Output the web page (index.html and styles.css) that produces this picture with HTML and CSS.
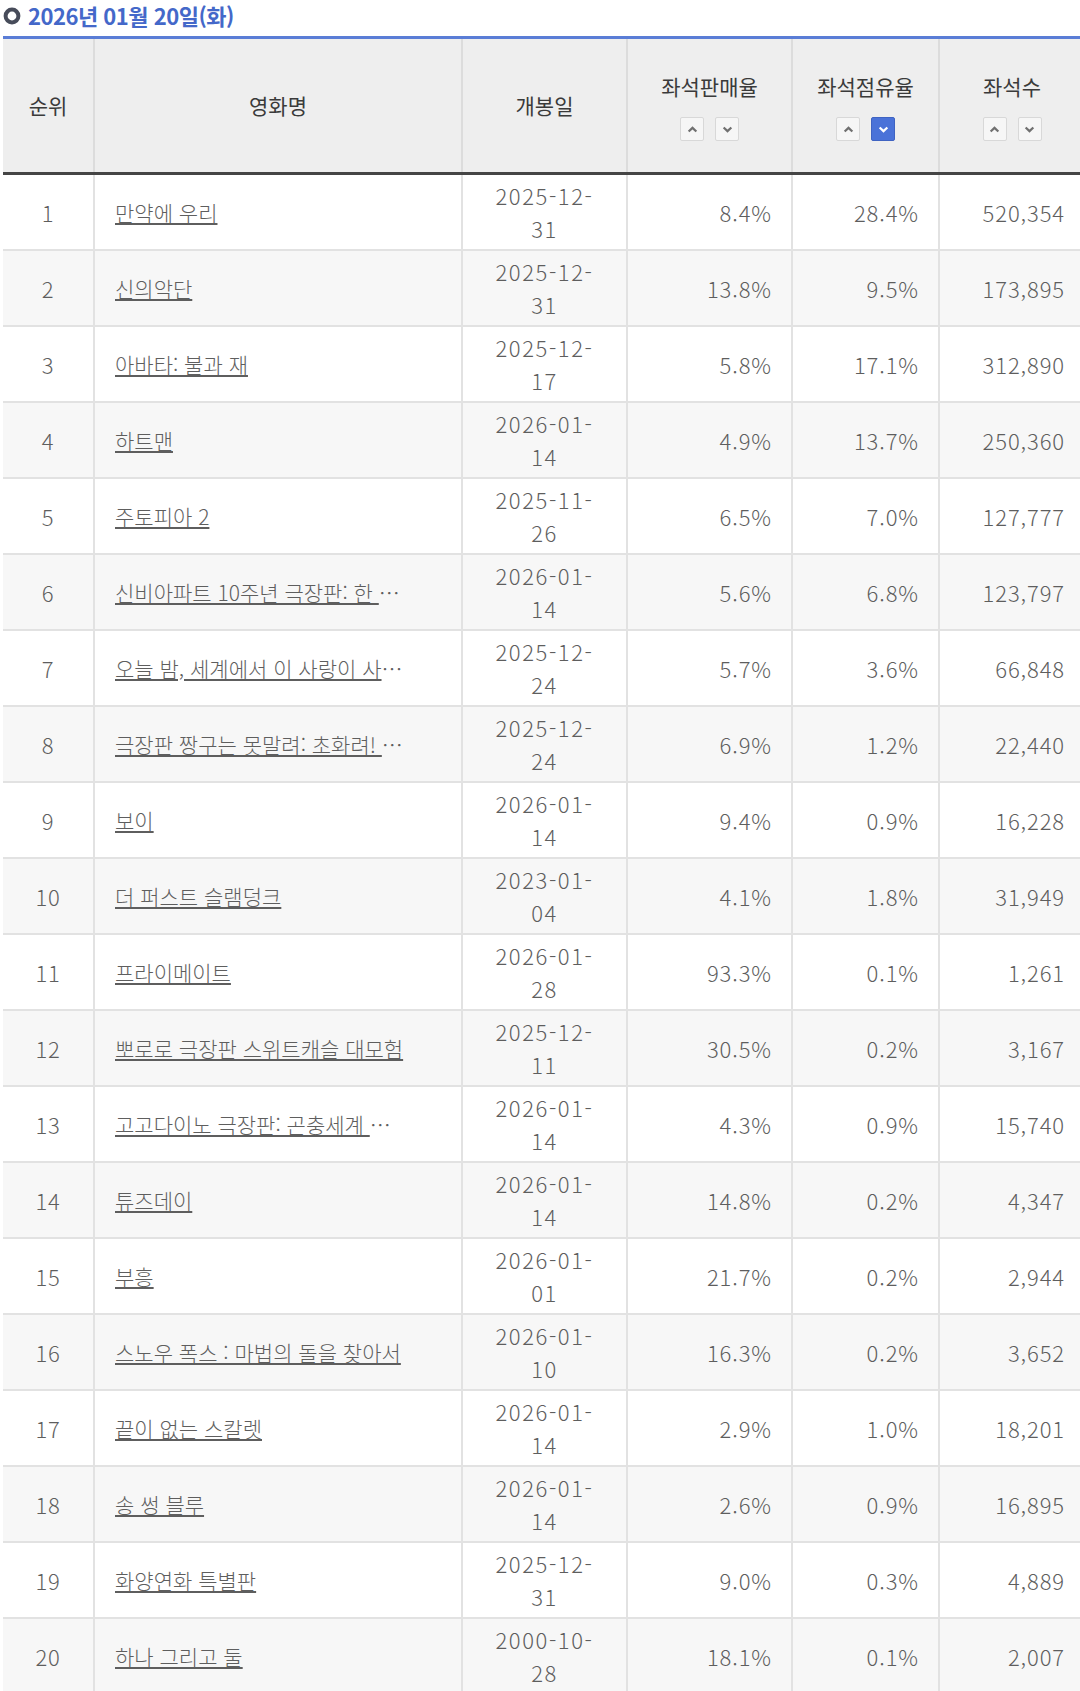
FILE: index.html
```html
<!DOCTYPE html>
<html lang="ko">
<head>
<meta charset="utf-8">
<title>좌석판매율 순위</title>
<link rel="stylesheet" href="styles.css">
</head>
<body>
<div class="page">
  <h2 class="date-title">
    <svg class="bullet" width="18" height="18" viewBox="0 0 18 18" aria-hidden="true"><circle cx="9" cy="9" r="6.4" fill="none" stroke="#474c5a" stroke-width="4"/></svg>
    <span>2026년 01월 20일(화)</span>
  </h2>
  <table class="rank-table">
    <colgroup>
      <col class="c-rank"><col class="c-name"><col class="c-date"><col class="c-rate"><col class="c-share"><col class="c-seat">
    </colgroup>
    <thead>
      <tr>
        <th>순위</th>
        <th>영화명</th>
        <th>개봉일</th>
        <th><div class="th-label">좌석판매율</div><div class="sort"><button class="sort-btn" aria-label="오름차순"><svg viewBox="0 0 10 6"><path d="M1.5 4.8 5 1.5 8.5 4.8"/></svg></button><button class="sort-btn" aria-label="내림차순"><svg viewBox="0 0 10 6"><path d="M1.5 1.2 5 4.5 8.5 1.2"/></svg></button></div></th>
        <th><div class="th-label">좌석점유율</div><div class="sort"><button class="sort-btn" aria-label="오름차순"><svg viewBox="0 0 10 6"><path d="M1.5 4.8 5 1.5 8.5 4.8"/></svg></button><button class="sort-btn active" aria-label="내림차순"><svg viewBox="0 0 10 6"><path d="M1.5 1.2 5 4.5 8.5 1.2"/></svg></button></div></th>
        <th><div class="th-label">좌석수</div><div class="sort"><button class="sort-btn" aria-label="오름차순"><svg viewBox="0 0 10 6"><path d="M1.5 4.8 5 1.5 8.5 4.8"/></svg></button><button class="sort-btn" aria-label="내림차순"><svg viewBox="0 0 10 6"><path d="M1.5 1.2 5 4.5 8.5 1.2"/></svg></button></div></th>
      </tr>
    </thead>
    <tbody>
      <tr><td class="rank">1</td><td class="name"><a href="#" class="movie-link">만약에 우리</a></td><td class="date">2025-12-<br>31</td><td class="num">8.4%</td><td class="num">28.4%</td><td class="num">520,354</td></tr>
      <tr><td class="rank">2</td><td class="name"><a href="#" class="movie-link">신의악단</a></td><td class="date">2025-12-<br>31</td><td class="num">13.8%</td><td class="num">9.5%</td><td class="num">173,895</td></tr>
      <tr><td class="rank">3</td><td class="name"><a href="#" class="movie-link">아바타: 불과 재</a></td><td class="date">2025-12-<br>17</td><td class="num">5.8%</td><td class="num">17.1%</td><td class="num">312,890</td></tr>
      <tr><td class="rank">4</td><td class="name"><a href="#" class="movie-link">하트맨</a></td><td class="date">2026-01-<br>14</td><td class="num">4.9%</td><td class="num">13.7%</td><td class="num">250,360</td></tr>
      <tr><td class="rank">5</td><td class="name"><a href="#" class="movie-link">주토피아 2</a></td><td class="date">2025-11-<br>26</td><td class="num">6.5%</td><td class="num">7.0%</td><td class="num">127,777</td></tr>
      <tr><td class="rank">6</td><td class="name"><a href="#" class="movie-link">신비아파트 10주년 극장판: 한 </a><span class="more">…</span></td><td class="date">2026-01-<br>14</td><td class="num">5.6%</td><td class="num">6.8%</td><td class="num">123,797</td></tr>
      <tr><td class="rank">7</td><td class="name"><a href="#" class="movie-link">오늘 밤, 세계에서 이 사랑이 사</a><span class="more">…</span></td><td class="date">2025-12-<br>24</td><td class="num">5.7%</td><td class="num">3.6%</td><td class="num">66,848</td></tr>
      <tr><td class="rank">8</td><td class="name"><a href="#" class="movie-link">극장판 짱구는 못말려: 초화려! </a><span class="more">…</span></td><td class="date">2025-12-<br>24</td><td class="num">6.9%</td><td class="num">1.2%</td><td class="num">22,440</td></tr>
      <tr><td class="rank">9</td><td class="name"><a href="#" class="movie-link">보이</a></td><td class="date">2026-01-<br>14</td><td class="num">9.4%</td><td class="num">0.9%</td><td class="num">16,228</td></tr>
      <tr><td class="rank">10</td><td class="name"><a href="#" class="movie-link">더 퍼스트 슬램덩크</a></td><td class="date">2023-01-<br>04</td><td class="num">4.1%</td><td class="num">1.8%</td><td class="num">31,949</td></tr>
      <tr><td class="rank">11</td><td class="name"><a href="#" class="movie-link">프라이메이트</a></td><td class="date">2026-01-<br>28</td><td class="num">93.3%</td><td class="num">0.1%</td><td class="num">1,261</td></tr>
      <tr><td class="rank">12</td><td class="name"><a href="#" class="movie-link">뽀로로 극장판 스위트캐슬 대모험</a></td><td class="date">2025-12-<br>11</td><td class="num">30.5%</td><td class="num">0.2%</td><td class="num">3,167</td></tr>
      <tr><td class="rank">13</td><td class="name"><a href="#" class="movie-link">고고다이노 극장판: 곤충세계 </a><span class="more">…</span></td><td class="date">2026-01-<br>14</td><td class="num">4.3%</td><td class="num">0.9%</td><td class="num">15,740</td></tr>
      <tr><td class="rank">14</td><td class="name"><a href="#" class="movie-link">튜즈데이</a></td><td class="date">2026-01-<br>14</td><td class="num">14.8%</td><td class="num">0.2%</td><td class="num">4,347</td></tr>
      <tr><td class="rank">15</td><td class="name"><a href="#" class="movie-link">부흥</a></td><td class="date">2026-01-<br>01</td><td class="num">21.7%</td><td class="num">0.2%</td><td class="num">2,944</td></tr>
      <tr><td class="rank">16</td><td class="name"><a href="#" class="movie-link">스노우 폭스 : 마법의 돌을 찾아서</a></td><td class="date">2026-01-<br>10</td><td class="num">16.3%</td><td class="num">0.2%</td><td class="num">3,652</td></tr>
      <tr><td class="rank">17</td><td class="name"><a href="#" class="movie-link">끝이 없는 스칼렛</a></td><td class="date">2026-01-<br>14</td><td class="num">2.9%</td><td class="num">1.0%</td><td class="num">18,201</td></tr>
      <tr><td class="rank">18</td><td class="name"><a href="#" class="movie-link">송 썽 블루</a></td><td class="date">2026-01-<br>14</td><td class="num">2.6%</td><td class="num">0.9%</td><td class="num">16,895</td></tr>
      <tr><td class="rank">19</td><td class="name"><a href="#" class="movie-link">화양연화 특별판</a></td><td class="date">2025-12-<br>31</td><td class="num">9.0%</td><td class="num">0.3%</td><td class="num">4,889</td></tr>
      <tr><td class="rank">20</td><td class="name"><a href="#" class="movie-link">하나 그리고 둘</a></td><td class="date">2000-10-<br>28</td><td class="num">18.1%</td><td class="num">0.1%</td><td class="num">2,007</td></tr>
    </tbody>
  </table>
</div>
</body>
</html>
```
FILE: styles.css
```css
html, body {
  margin: 0;
  padding: 0;
  overflow: hidden;
  background: #fff;
}
body {
  font-family: "Noto Sans CJK KR", "Noto Sans", sans-serif;
  color: #5e5e5e;
}
.page {
  width: 1085px;
  padding-left: 3px;
  box-sizing: border-box;
}
.date-title {
  display: flex;
  align-items: center;
  gap: 7px;
  height: 36px;
  margin: 0;
  font-size: 22px;
  font-weight: 700;
  color: #4468c9;
  letter-spacing: -0.5px;
}
.date-title .bullet {
  flex: none;
  margin-top: -5px;
}
.date-title span {
  margin-top: -6px;
}
.rank-table {
  width: 1082px;
  border-collapse: collapse;
  table-layout: fixed;
  border-top: 3px solid #5a7dd6;
  font-size: 21px;
  line-height: 33px;
}
.c-rank { width: 91px; }
.c-name { width: 368px; }
.c-date { width: 165px; }
.c-rate { width: 165px; }
.c-share { width: 147px; }
.c-seat { width: 146px; }

.rank-table th {
  height: 133px;
  padding: 0;
  background: #eeeeee;
  color: #3a3a3a;
  font-weight: 400;
  font-size: 21px;
  text-align: center;
  vertical-align: middle;
  border-right: 2px solid #dcdcdc;
  border-bottom: 3px solid #454545;
}
.th-label {
  line-height: 33px;
}
.sort {
  display: flex;
  justify-content: center;
  gap: 11px;
  margin-top: 14px;
}
.sort-btn {
  width: 24px;
  height: 24px;
  padding: 0;
  border: 1px solid #d8d8d8;
  border-radius: 2px;
  background: #f6f6f6;
  display: flex;
  align-items: center;
  justify-content: center;
}
.sort-btn svg {
  width: 11px;
  height: 7px;
  fill: none;
  stroke: #707070;
  stroke-width: 2;
}
.sort-btn.active {
  background: #4a72d8;
  border-color: #3f63c2;
}
.sort-btn.active svg {
  stroke: #fff;
}

.rank-table td {
  height: 74px;
  padding: 0 20px;
  border-right: 2px solid #e2e2e2;
  border-bottom: 2px solid #e2e2e2;
  vertical-align: middle;
  font-weight: 300;
  color: #5e5e5e;
}
.rank-table tbody tr:nth-child(even) td {
  background: #f7f7f7;
}
.rank-table td.rank {
  text-align: center;
  padding: 0;
  font-size: 22px;
  letter-spacing: 0.8px;
}
.rank-table td.date {
  text-align: center;
  font-size: 22px;
  letter-spacing: 1.6px;
}
.rank-table td.num {
  text-align: right;
  font-size: 22px;
  letter-spacing: 0.9px;
  padding-right: 19px;
}
.rank-table td.name {
  white-space: nowrap;
}
.movie-link {
  color: #5e5e5e;
  text-decoration: underline;
  text-decoration-thickness: 2px;
  text-underline-offset: 2px;
}
.more {
  color: #5e5e5e;
}
```
